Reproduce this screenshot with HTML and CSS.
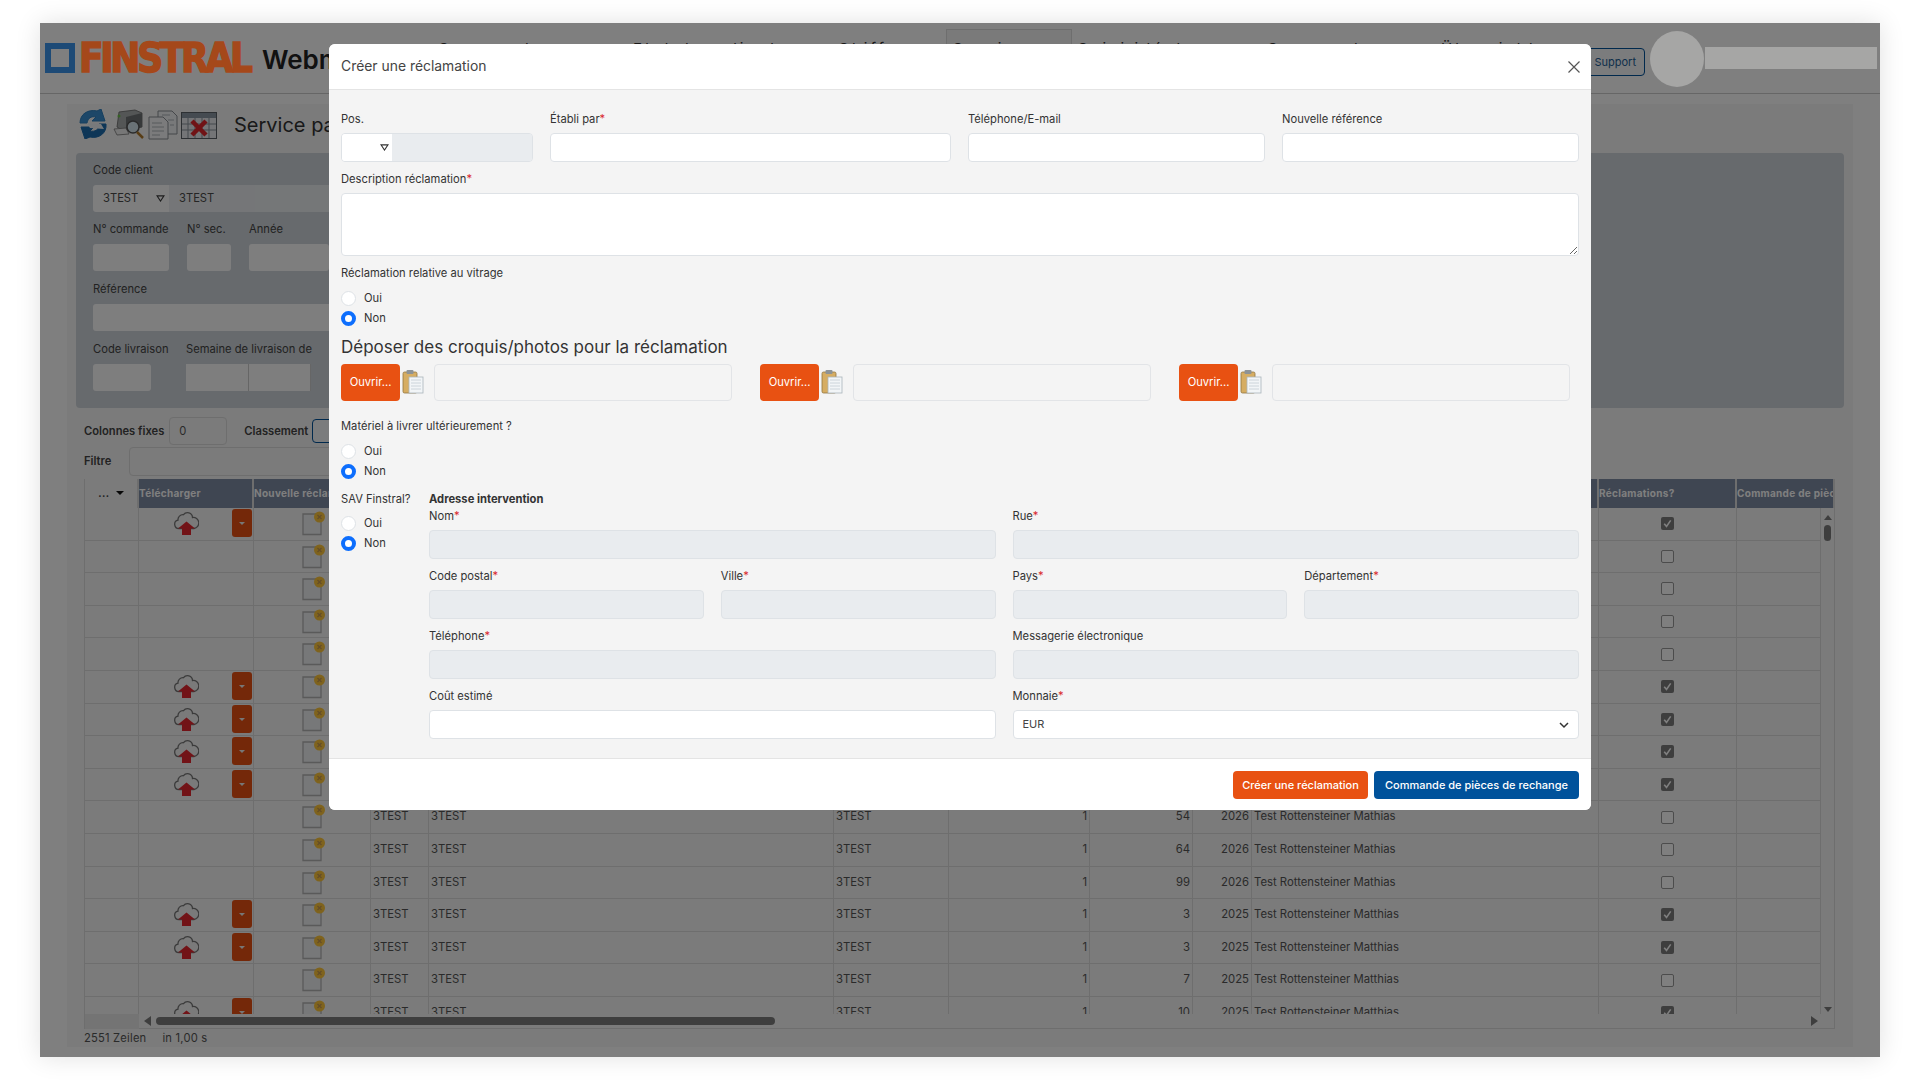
FILE: index.html
```html
<!DOCTYPE html>
<html lang="fr">
<head>
	<meta charset="utf-8">
	<title>Créer une réclamation</title>
	<link rel="stylesheet" href="styles.css">
</head>
<body>
<svg class="defs" aria-hidden="true">
	<symbol id="cloud" viewBox="0 0 25 26">
		<path d="M5 18.500a4.200 4.200 0 0 1-1-8.300a5 5 0 0 1 5.500-5.500a5 5 0 0 1 9 2.800a4.500 4.500 0 0 1 1.500 11z" fill="#f4f4f4" stroke="#777" stroke-width="1.300"/>
		<path d="M12.500 11.500l8.500 7h-4v6.500h-9v-6.500h-4z" fill="#e4272e"/>
	</symbol>
	<symbol id="doc" viewBox="0 0 24 26">
		<path d="M1 4h18v20.500h-18z" fill="#eef0f2" stroke="#b4b4b4" stroke-width="1.300"/>
		<circle cx="17.500" cy="7" r="5.500" fill="#ffc63a"/>
		<path d="M15.500 5l4 4m0-4l-4 4" stroke="#c89a50" stroke-width="1.300"/>
	</symbol>
	<symbol id="clip" viewBox="0 0 22 25">
		<rect x="1" y="3" width="14" height="21" rx="1.500" fill="#d6ad62" stroke="#8f7440" stroke-width=".8"/>
		<rect x="4.500" y="1" width="7" height="4" rx="1" fill="#8d9396"/>
		<rect x="7" y="8" width="14" height="16" fill="#f2f5f7" stroke="#aab4bb" stroke-width=".8"/>
		<path d="M9 11h10M9 14h10M9 17h10M9 20h10" stroke="#c3ccd3" stroke-width=".8"/>
	</symbol>
	<symbol id="tri" viewBox="0 0 10 8">
		<path d="M1 1h8l-4 6z" fill="#fff" stroke="#333" stroke-width="1.200"/>
	</symbol>
	<symbol id="tick" viewBox="0 0 13 13">
		<rect width="13" height="13" rx="2" fill="#7d7d7d"/>
		<path d="M3.200 6.800l2.300 2.600l4.200-6" fill="none" stroke="#fff" stroke-width="1.600"/>
	</symbol>
</svg>

<div class="screen">
	<header class="topbar">
		<div class="brand">
			<span class="logo-mark"></span>
			<span class="logo-name">FINSTRAL</span>
			<span class="logo-app">Webmanager</span>
		</div>
		<nav class="nav">
			<a class="nav-a">Commande</a>
			<a class="nav-b">Etat des clients</a>
			<a class="nav-c">Chiffres</a>
			<a class="nav-d active">Service</a>
			<a class="nav-e">Suivi idéal</a>
			<a class="nav-f">Commande</a>
			<a class="nav-g">Übersicht</a>
		</nav>
		<button class="support">Support</button>
		<span class="avatar"></span>
		<span class="username"></span>
	</header>

	<main class="content">
		<div class="toolbar">
			<svg class="tool tool-a" viewBox="0 0 31 30">
				<path d="M3 14C3 5 11 0 20 2l4-2l4 12h-13l4-4c-5-1-8 1-9 6z" fill="#3a8fd0" stroke="#2f7fbe"/>
				<path d="M29 15c1 9-7 15-16 13l-5 2l-4-12h13l-4 4c5 1 9-1 9-7z" fill="#1c6cae" stroke="#1c6cae"/>
				<path d="M10 14l14 1l3 5l-14-1z" fill="#eef3f7"/>
			</svg>
			<svg class="tool tool-b" viewBox="0 0 32 30">
				<path d="M6 3l16-2l7 3v14l-18 4l-7-4z" fill="#a9adad" stroke="#666" stroke-width=".8"/>
				<path d="M13 8l16-4v14l-16 4z" fill="#6f7375"/>
				<path d="M1 20l12-1l3 6l-12 1z" fill="#eee" stroke="#777" stroke-width=".8"/>
				<circle cx="6" cy="7" r="1.500" fill="#6cc24a"/>
				<circle cx="20" cy="18" r="6" fill="#d5e4ec" stroke="#555" stroke-width="1.500"/>
				<path d="M24 23l6 6" stroke="#b07a2c" stroke-width="2.500"/>
			</svg>
			<svg class="tool tool-c" viewBox="0 0 30 30">
				<path d="M10 1h14l5 5v18h-19z" fill="#f0f2f4" stroke="#8a8f94"/>
				<path d="M1 7h14l5 5v17h-19z" fill="#f6f7f8" stroke="#8a8f94"/>
				<path d="M4 13h10M4 17h12M4 21h12M4 25h8M14 5h8M20 10h6M22 15h4" stroke="#aeb4ba"/>
			</svg>
			<svg class="tool tool-d" viewBox="0 0 36 27">
				<rect x=".5" y=".5" width="35" height="26" fill="#e8ebee" stroke="#5a6066"/>
				<rect x="1" y="1" width="34" height="5" fill="#8a97a3"/>
				<path d="M1 12h34M1 18h34M7 6v20M14 6v20M21 6v20M28 6v20" stroke="#8a939b"/>
				<path d="M11 9l14 14m0-14l-14 14" stroke="#e0262c" stroke-width="4.500"/>
			</svg>
			<h1 class="page-title">Service partenaires</h1>
		</div>

		<section class="panel">
			<div class="panel-row">
				<div class="pfield">
					<label>Code client</label>
					<div class="combo">
						<span class="pinput combo-sel">3TEST<svg class="tri"><use href="#tri"/></svg></span>
						<span class="pinput combo-val">3TEST</span>
					</div>
				</div>
			</div>
			<div class="panel-row">
				<div class="pfield w76"><label>N° commande</label><span class="pinput"></span></div>
				<div class="pfield w44"><label>N° sec.</label><span class="pinput"></span></div>
				<div class="pfield w80"><label>Année</label><span class="pinput"></span></div>
			</div>
			<div class="panel-row">
				<div class="pfield w500"><label>Référence</label><span class="pinput"></span></div>
			</div>
			<div class="panel-row">
				<div class="pfield w58"><label>Code livraison</label><span class="pinput"></span></div>
				<div class="pfield w125"><label>Semaine de livraison de</label>
					<div class="combo"><span class="pinput half"></span><span class="pinput half"></span></div>
				</div>
			</div>
		</section>

		<div class="ctl-row ctl-first">
			<b class="ctl-label">Colonnes fixes</b>
			<span class="ctl-input">0</span>
			<b class="ctl-label ctl-sort">Classement</b>
			<span class="ctl-btn"></span>
		</div>
		<div class="ctl-row ctl-second">
			<b class="ctl-label">Filtre</b>
			<span class="ctl-filter"></span>
		</div>

		<div class="grid">
			<div class="grid-head">
				<span class="gh first">... <i class="caret"></i></span>
				<span class="gh">Télécharger</span>
				<span class="gh">Nouvelle réclamation</span>
				<span class="gh"></span>
				<span class="gh"></span>
				<span class="gh"></span>
				<span class="gh"></span>
				<span class="gh"></span>
				<span class="gh"></span>
				<span class="gh"></span>
				<span class="gh">Réclamations?</span>
				<span class="gh">Commande de pièces</span>
			</div>
			<div class="grid-body">
				<div class="rows">
					<div class="row"><span></span><span class="dl"><svg class="cloud"><use href="#cloud"/></svg><i class="drop"></i></span><span class="nw"><svg class="doc"><use href="#doc"/></svg></span><span></span><span></span><span></span><span></span><span></span><span></span><span></span><span class="chk"><svg class="box"><use href="#tick"/></svg></span><span></span></div>
					<div class="row"><span></span><span class="dl"></span><span class="nw"><svg class="doc"><use href="#doc"/></svg></span><span></span><span></span><span></span><span></span><span></span><span></span><span></span><span class="chk"><i class="empty"></i></span><span></span></div>
					<div class="row"><span></span><span class="dl"></span><span class="nw"><svg class="doc"><use href="#doc"/></svg></span><span></span><span></span><span></span><span></span><span></span><span></span><span></span><span class="chk"><i class="empty"></i></span><span></span></div>
					<div class="row"><span></span><span class="dl"></span><span class="nw"><svg class="doc"><use href="#doc"/></svg></span><span></span><span></span><span></span><span></span><span></span><span></span><span></span><span class="chk"><i class="empty"></i></span><span></span></div>
					<div class="row"><span></span><span class="dl"></span><span class="nw"><svg class="doc"><use href="#doc"/></svg></span><span></span><span></span><span></span><span></span><span></span><span></span><span></span><span class="chk"><i class="empty"></i></span><span></span></div>
					<div class="row"><span></span><span class="dl"><svg class="cloud"><use href="#cloud"/></svg><i class="drop"></i></span><span class="nw"><svg class="doc"><use href="#doc"/></svg></span><span></span><span></span><span></span><span></span><span></span><span></span><span></span><span class="chk"><svg class="box"><use href="#tick"/></svg></span><span></span></div>
					<div class="row"><span></span><span class="dl"><svg class="cloud"><use href="#cloud"/></svg><i class="drop"></i></span><span class="nw"><svg class="doc"><use href="#doc"/></svg></span><span></span><span></span><span></span><span></span><span></span><span></span><span></span><span class="chk"><svg class="box"><use href="#tick"/></svg></span><span></span></div>
					<div class="row"><span></span><span class="dl"><svg class="cloud"><use href="#cloud"/></svg><i class="drop"></i></span><span class="nw"><svg class="doc"><use href="#doc"/></svg></span><span></span><span></span><span></span><span></span><span></span><span></span><span></span><span class="chk"><svg class="box"><use href="#tick"/></svg></span><span></span></div>
					<div class="row"><span></span><span class="dl"><svg class="cloud"><use href="#cloud"/></svg><i class="drop"></i></span><span class="nw"><svg class="doc"><use href="#doc"/></svg></span><span></span><span></span><span></span><span></span><span></span><span></span><span></span><span class="chk"><svg class="box"><use href="#tick"/></svg></span><span></span></div>
					<div class="row"><span></span><span class="dl"></span><span class="nw"><svg class="doc"><use href="#doc"/></svg></span><span>3TEST</span><span>3TEST</span><span>3TEST</span><span class="num">1</span><span class="num">54</span><span class="num">2026</span><span>Test Rottensteiner Mathias</span><span class="chk"><i class="empty"></i></span><span></span></div>
					<div class="row"><span></span><span class="dl"></span><span class="nw"><svg class="doc"><use href="#doc"/></svg></span><span>3TEST</span><span>3TEST</span><span>3TEST</span><span class="num">1</span><span class="num">64</span><span class="num">2026</span><span>Test Rottensteiner Mathias</span><span class="chk"><i class="empty"></i></span><span></span></div>
					<div class="row"><span></span><span class="dl"></span><span class="nw"><svg class="doc"><use href="#doc"/></svg></span><span>3TEST</span><span>3TEST</span><span>3TEST</span><span class="num">1</span><span class="num">99</span><span class="num">2026</span><span>Test Rottensteiner Mathias</span><span class="chk"><i class="empty"></i></span><span></span></div>
					<div class="row"><span></span><span class="dl"><svg class="cloud"><use href="#cloud"/></svg><i class="drop"></i></span><span class="nw"><svg class="doc"><use href="#doc"/></svg></span><span>3TEST</span><span>3TEST</span><span>3TEST</span><span class="num">1</span><span class="num">3</span><span class="num">2025</span><span>Test Rottensteiner Matthias</span><span class="chk"><svg class="box"><use href="#tick"/></svg></span><span></span></div>
					<div class="row"><span></span><span class="dl"><svg class="cloud"><use href="#cloud"/></svg><i class="drop"></i></span><span class="nw"><svg class="doc"><use href="#doc"/></svg></span><span>3TEST</span><span>3TEST</span><span>3TEST</span><span class="num">1</span><span class="num">3</span><span class="num">2025</span><span>Test Rottensteiner Matthias</span><span class="chk"><svg class="box"><use href="#tick"/></svg></span><span></span></div>
					<div class="row"><span></span><span class="dl"></span><span class="nw"><svg class="doc"><use href="#doc"/></svg></span><span>3TEST</span><span>3TEST</span><span>3TEST</span><span class="num">1</span><span class="num">7</span><span class="num">2025</span><span>Test Rottensteiner Matthias</span><span class="chk"><i class="empty"></i></span><span></span></div>
					<div class="row"><span></span><span class="dl"><svg class="cloud"><use href="#cloud"/></svg><i class="drop"></i></span><span class="nw"><svg class="doc"><use href="#doc"/></svg></span><span>3TEST</span><span>3TEST</span><span>3TEST</span><span class="num">1</span><span class="num">10</span><span class="num">2025</span><span>Test Rottensteiner Matthias</span><span class="chk"><svg class="box"><use href="#tick"/></svg></span><span></span></div>
				</div>
				<div class="vbar">
					<i class="arrow-up"></i>
					<i class="vthumb"></i>
					<i class="arrow-down"></i>
				</div>
			</div>
			<div class="hbar">
				<span class="hcorner"></span>
				<i class="arrow-left"></i>
				<i class="hthumb"></i>
				<i class="arrow-right"></i>
			</div>
		</div>
		<div class="status"><span>2551 Zeilen</span><span>in 1,00 s</span></div>
	</main>

	<div class="backdrop">
		<form class="modal">
			<div class="modal-head">
				<span class="modal-title">Créer une réclamation</span>
				<svg class="close" viewBox="0 0 12 12"><path d="M.5.5l11 11m0-11l-11 11"/></svg>
			</div>
			<div class="modal-body">
				<div class="row-top">
					<div class="field">
						<label>Pos.</label>
						<div class="pos"><span class="pos-sel"><svg class="tri"><use href="#tri"/></svg></span><span class="pos-val"></span></div>
					</div>
					<div class="field"><label>Établi par<em>*</em></label><input type="text" class="inp"></div>
					<div class="field"><label>Téléphone/E-mail</label><input type="text" class="inp"></div>
					<div class="field"><label>Nouvelle référence</label><input type="text" class="inp"></div>
				</div>
				<div class="field gap10">
					<label>Description réclamation<em>*</em></label>
					<textarea class="inp area"></textarea>
				</div>
				<div class="field gap10 tight"><label>Réclamation relative au vitrage</label></div>
				<div class="radios">
					<label class="radio"><input type="radio" name="vit">Oui</label>
					<label class="radio"><input type="radio" name="vit" checked>Non</label>
				</div>
				<h2 class="upload-title">Déposer des croquis/photos pour la réclamation</h2>
				<div class="uploads">
					<div class="upload"><span class="open">Ouvrir...</span><svg class="clip"><use href="#clip"/></svg><span class="upload-name"></span></div>
					<div class="upload"><span class="open">Ouvrir...</span><svg class="clip"><use href="#clip"/></svg><span class="upload-name"></span></div>
					<div class="upload"><span class="open">Ouvrir...</span><svg class="clip"><use href="#clip"/></svg><span class="upload-name"></span></div>
				</div>
				<div class="field gap18 tight"><label>Matériel à livrer ultérieurement ?</label></div>
				<div class="radios">
					<label class="radio"><input type="radio" name="mat">Oui</label>
					<label class="radio"><input type="radio" name="mat" checked>Non</label>
				</div>
				<div class="sav">
					<div class="sav-left">
						<label class="sav-label">SAV Finstral?</label>
						<div class="radios">
							<label class="radio"><input type="radio" name="sav">Oui</label>
							<label class="radio"><input type="radio" name="sav" checked>Non</label>
						</div>
					</div>
					<div class="sav-right">
						<div class="addr-title">Adresse intervention</div>
						<div class="addr-grid">
							<div class="field span2"><label>Nom<em>*</em></label><input type="text" class="inp off" disabled></div>
							<div class="field span2"><label>Rue<em>*</em></label><input type="text" class="inp off" disabled></div>
							<div class="field"><label>Code postal<em>*</em></label><input type="text" class="inp off" disabled></div>
							<div class="field"><label>Ville<em>*</em></label><input type="text" class="inp off" disabled></div>
							<div class="field"><label>Pays<em>*</em></label><input type="text" class="inp off" disabled></div>
							<div class="field"><label>Département<em>*</em></label><input type="text" class="inp off" disabled></div>
							<div class="field span2"><label>Téléphone<em>*</em></label><input type="text" class="inp off" disabled></div>
							<div class="field span2"><label>Messagerie électronique</label><input type="text" class="inp off" disabled></div>
							<div class="field span2"><label>Coût estimé</label><input type="text" class="inp"></div>
							<div class="field span2"><label>Monnaie<em>*</em></label>
								<div class="inp currency">EUR<svg class="chev" viewBox="0 0 12 12"><path d="M2 4l4 4l4-4"/></svg></div>
							</div>
						</div>
					</div>
				</div>
			</div>
			<div class="modal-foot">
				<button type="button" class="btn btn-orange">Créer une réclamation</button>
				<button type="button" class="btn btn-blue">Commande de pièces de rechange</button>
			</div>
		</form>
	</div>
</div>
</body>
</html>
```

FILE: styles.css
```css
html, body { margin: 0; background: white; }
body { font-family: Inter, "Noto Sans", sans-serif; font-size: 11.2px; color: #555; padding: 23px 0 0 40px; height: 1057px; overflow: hidden; }
.defs { display: none; }
input, button, textarea { font-family: inherit; }

.screen {
	position: relative;
	width: 1840px;
	height: 1034px;
	overflow: hidden;
	background: white;
	box-shadow: 0 0 24px rgba(0,0,0,.12);
}

/*** Top bar ***/
.topbar { display: flex; height: 70px; border-bottom: 1px solid #ccc; }
.brand { display: flex; width: 398px; padding: 20px 0 0 5px; box-sizing: border-box; }
.logo-mark { width: 30px; height: 30px; box-sizing: border-box; border: 6px solid #3a94ec; margin-right: 4px; }
.logo-name {
	position: relative;
	z-index: 5;
	font-family: "DejaVu Sans", sans-serif;
	font-stretch: condensed;
	font-weight: bold;
	font-size: 40px;
	line-height: 30px;
	color: #a5481a;
	letter-spacing: -3.3px;
	width: 183px;
	white-space: nowrap;
	-webkit-text-stroke: 1.400px #a5481a;
}
.logo-app { font-size: 26px; font-weight: 600; line-height: 30px; color: #222; white-space: nowrap; margin-top: 2px; }
.nav { display: grid; grid-template-columns: 195px 205px 108px 126px 195px 174px 119px; }
.nav a { font-size: 15px; letter-spacing: 3px; padding-top: 16px; color: #333; white-space: nowrap; }
.nav .active { margin-top: 6px; padding: 9px 0 0 6px; border: 1px solid #ddd; border-bottom: 0; background: #f4f4f4; box-sizing: border-box; }
.nav .nav-e { padding-left: 6px; }
.support {
	align-self: flex-start;
	width: 84px;
	height: 28px;
	margin: 25px 0 0 1px;
	padding: 0 8px 0 0;
	text-align: right;
	font-size: 11px;
	background: #f6f8fb;
	color: #235f96;
	border: 1px solid #00529b;
	border-radius: 4px;
}
.avatar, .username { position: relative; z-index: 5; background: #a6a6a5; }
.avatar { width: 54px; height: 56px; border-radius: 50%; margin: 8px 0 0 5px; }
.username { width: 172px; height: 22px; margin: 24px 0 0 1px; }

/*** Page ***/
.content { margin: 10px 27px; height: 943px; background: #f6f6f6; }
.toolbar { display: flex; align-items: center; height: 49px; padding-left: 10px; }
.tool { height: 30px; flex: none; }
.tool-a { width: 31px; margin-top: -9px; }
.tool-b { width: 32px; margin: -9px 0 0 5px; }
.tool-c { width: 30px; margin: -7px 0 0 3px; }
.tool-d { width: 36px; height: 27px; margin: -7px 0 0 3px; }
.page-title { font-size: 20px; font-weight: 400; color: #333; margin: -7px 0 0 17px; }

.panel { margin: 0 9px; height: 255px; padding: 10px 17px; box-sizing: border-box; background: #ced4da; border-radius: 4px; }
.panel-row { display: flex; height: 49px; margin-bottom: 11px; gap: 18px; }
.panel-row:first-child { margin-bottom: 10px; }
.pfield label { display: block; line-height: 14px; margin-bottom: 8px; white-space: nowrap; color: #444; }
.w76 { width: 76px; }
.w44 { width: 44px; }
.w80 { width: 80px; }
.w500 { width: 560px; }
.w58 { width: 58px; margin-right: 17px; }
.w125 { width: 125px; }
.pinput { display: block; height: 27px; line-height: 27px; background: white; opacity: .95; border-radius: 3px; box-sizing: border-box; padding-left: 10px; color: #444; }
.combo { display: flex; }
.combo-sel { position: relative; width: 76px; border-radius: 3px 0 0 3px; }
.combo-val { width: 500px; background: #eceff2; border-radius: 0; }
.half { width: 62.5px; border-radius: 0; border-right: 1px solid #ccc; }
.tri { width: 9px; height: 7px; position: absolute; right: 3px; top: 10px; }
.combo-sel .tri { right: 4px; }

.ctl-row { display: flex; align-items: center; height: 28px; padding-left: 17px; }
.ctl-first { margin-top: 9px; }
.ctl-second { margin-top: 2px; }
.ctl-label { font-weight: 600; color: #444; white-space: nowrap; }
.ctl-input { width: 58px; height: 28px; line-height: 26px; margin-left: 5px; padding-left: 9px; box-sizing: border-box; border: 1px solid #ddd; border-radius: 4px; background: #f6f6f6; }
.ctl-sort { margin-left: 17px; }
.ctl-btn { width: 60px; height: 24px; margin-left: 4px; box-sizing: border-box; border: 1px solid #00529b; border-radius: 4px; background: #f6f8fb; }
.ctl-filter { width: 580px; height: 27px; margin-left: 18px; border: 1px solid #ddd; border-radius: 4px; background: #f6f6f6; }

/*** Grid ***/
.grid { width: 1751px; height: 550px; margin: 4px 0 0 17px; box-sizing: border-box; border: 1px solid #ddd; border-width: 0 1px 1px 1px; }
.grid-head, .row { display: grid; grid-template-columns: 54px 115px 117px 58px 405px 115px 141px 103px 59px 347px 138px 84px; }
.grid-head { height: 29px; grid-template-columns: 54px 115px 117px 58px 405px 115px 141px 103px 59px 347px 138px 98px; }
.gh {
	display: block;
	background: #7e8ca4;
	color: #fff;
	font-size: 10px;
	font-weight: 700;
	line-height: 29px;
	letter-spacing: .3px;
	white-space: nowrap;
	overflow: hidden;
	border-right: 2px solid #ddd;
}
.gh.first { background: #f6f6f6; color: #444; text-align: center; }
.caret { display: inline-block; border: 4px solid transparent; border-top-color: #111; border-bottom: 0; vertical-align: 2px; margin-left: 4px; }
.grid-body { display: flex; height: 506px; }
.rows { width: 1736px; overflow: hidden; flex: none; }
.row { height: 32.6px; box-sizing: border-box; border-bottom: 1px solid #ddd; }
.row span { display: block; font-size: 11.3px; line-height: 31px; padding: 0 2px; border-right: 1px solid #ddd; white-space: nowrap; overflow: hidden; position: relative; }
.row .num { text-align: right; }
.row .dl { padding: 0; display: flex; }
.row .nw { padding: 0; text-align: center; }
.row .chk { padding: 0; display: flex; align-items: center; justify-content: center; }
.cloud { width: 25px; height: 26px; margin: 2px 0 0 35px; flex: none; }
.drop { width: 20px; height: 28px; margin: 1px 0 0 33px; flex: none; background: #e85112; border-radius: 3px; position: relative; }
.drop::after { content: ""; position: absolute; left: 7px; top: 13px; border: 3px solid transparent; border-top-color: #eee; border-bottom: 0; }
.doc { width: 24px; height: 26px; margin: 2px 0 0 4px; }
.box { width: 13px; height: 13px; }
.empty { width: 13px; height: 13px; box-sizing: border-box; border: 1px solid #999; border-radius: 2px; background: #fff; }

.vbar { width: 15px; display: flex; flex-direction: column; align-items: center; padding-top: 7px; position: relative; }
.arrow-up { border: 4px solid transparent; border-bottom: 5px solid #7d7d7d; border-top: 0; }
.vthumb { width: 7px; height: 16px; margin-top: 5px; border-radius: 4px; background: #7d7d7d; }
.arrow-down { margin-top: auto; margin-bottom: 2px; border: 4px solid transparent; border-top: 5px solid #7d7d7d; border-bottom: 0; }
.hbar { display: flex; align-items: center; height: 15px; }
.hcorner { width: 54px; height: 15px; background: #e9e9e9; }
.arrow-left { margin: -2px 0 0 5px; border: 5px solid transparent; border-right: 7px solid #7d7d7d; border-left: 0; }
.hthumb { width: 619px; height: 8px; margin: -2px 0 0 5px; border-radius: 4px; background: #7d7d7d; }
.arrow-right { margin: -2px 16px 0 auto; border: 5px solid transparent; border-left: 7px solid #7d7d7d; border-right: 0; }
.status { display: flex; gap: 16px; padding-left: 17px; line-height: 20px; letter-spacing: .2px; margin-top: -1px; }

/*** Modal ***/
.backdrop { position: absolute; inset: 0; z-index: 2; background: rgba(0,0,0,.5); }
.modal {
	position: absolute;
	left: 289px;
	top: 21px;
	width: 1262px;
	height: 766px;
	display: flex;
	flex-direction: column;
	background: #f4f4f4;
	border-radius: 6px;
	overflow: hidden;
	color: #333;
}
.modal-head { display: flex; align-items: center; justify-content: space-between; height: 46px; box-sizing: border-box; padding: 0 11px 0 12px; background: white; border-bottom: 1px solid #e4e4e4; }
.modal-title { font-size: 13.9px; color: #444; margin-top: -2px; }
.close { width: 12px; height: 12px; margin-top: 1px; }
.close path { stroke: #555; stroke-width: 1.200; fill: none; }
.modal-body { flex: 1; padding: 22px 12px 0; }
.modal-foot { display: flex; justify-content: flex-end; align-items: center; gap: 6px; height: 52px; box-sizing: border-box; padding: 1px 12px 0; background: white; border-top: 1px solid #e4e4e4; }

.row-top { display: grid; grid-template-columns: 192px 401px 297px 297px; gap: 17px; }
.field label { display: block; line-height: 14px; margin-bottom: 7px; white-space: nowrap; }
.field em { color: #d9262c; font-style: normal; }
.inp { display: block; width: 100%; height: 29px; box-sizing: border-box; border: 1px solid #dee2e6; border-radius: 4px; background: white; padding: 0 9px; margin: 0; font-size: 11px; }
.inp.off { background: #e9ecef; }
.area { height: 63px; resize: vertical; }
.gap10 { margin-top: 10px; }
.gap18 { margin-top: 18px; }
.tight label { margin-bottom: 0; }
.pos { display: flex; height: 29px; border: 1px solid #dee2e6; border-radius: 4px; box-sizing: border-box; overflow: hidden; }
.pos-sel { position: relative; width: 50px; background: white; flex: none; }
.pos-sel .tri { right: 3px; top: 10px; }
.pos-val { flex: 1; background: #e9ecef; }

.radios { margin-top: 8px; }
.radio { display: flex; align-items: center; height: 20px; line-height: 20px; }
.radio input {
	appearance: none;
	width: 15px;
	height: 15px;
	margin: 0 8px 0 0;
	background: white;
	border: 1px solid #dee2e6;
	border-radius: 50%;
	box-sizing: border-box;
}
.radio input:checked { border: 4.500px solid #0d6efd; }

.upload-title { font-size: 17px; font-weight: 400; line-height: 22px; margin: 8px 0 6px; color: #333; }
.uploads { display: flex; gap: 28px; }
.upload { display: flex; align-items: center; width: 391px; }
.open { display: block; width: 59px; height: 37px; line-height: 37px; text-align: center; background: #e85112; border-radius: 4px; color: white; flex: none; }
.clip { width: 22px; height: 25px; margin: -3px 10px 0 2px; flex: none; }
.upload-name { flex: none; width: 298px; height: 37px; box-sizing: border-box; border: 1px solid #e2e4e7; border-radius: 4px; }

.sav { display: flex; margin-top: 11px; }
.sav-left { width: 88px; flex: none; }
.sav-label { display: block; line-height: 14px; white-space: nowrap; }
.sav-left .radios { margin-top: 7px; }
.sav-right { flex: 1; }
.addr-title { font-weight: 700; color: #333; line-height: 14px; margin-bottom: 3px; }
.addr-grid { display: grid; grid-template-columns: repeat(4, 1fr); gap: 10px 17px; }
.span2 { grid-column: span 2; }
.currency { display: flex; align-items: center; justify-content: space-between; line-height: 27px; color: #444; }
.chev { width: 12px; height: 12px; margin-right: -1px; }
.chev path { fill: none; stroke: #333; stroke-width: 1.500; }

.btn { height: 28px; padding: 0; border: 0; border-radius: 4px; color: white; font-size: 11px; font-weight: 500; }
.btn-orange { width: 135px; background: #e85112; }
.btn-blue { width: 205px; background: #00529b; }
```
